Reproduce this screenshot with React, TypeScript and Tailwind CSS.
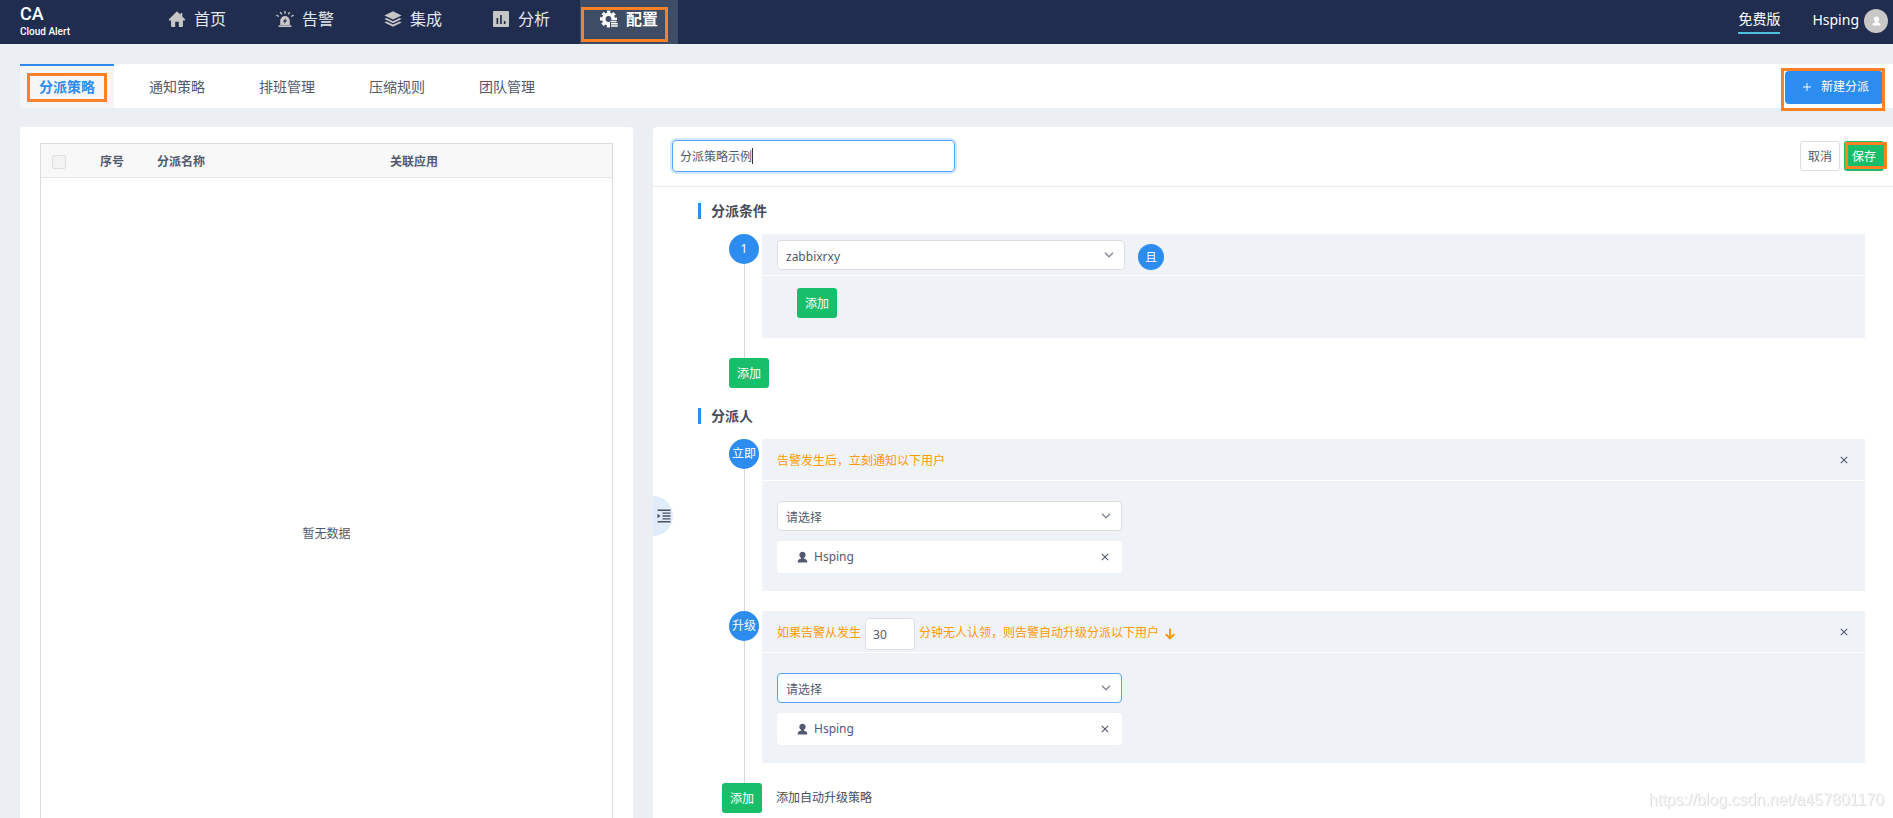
import React, { useState } from "react";

type IconProps = { className?: string };

const HomeIcon = ({ className }: IconProps) => (
  <svg viewBox="0 0 18 18" className={className} fill="currentColor" aria-hidden="true">
    <path d="M9 1.200 1 9.200a.7.7 0 0 0 .5 1.200H3V16a1 1 0 0 0 1 1h3.200v-5.200h3.600V17H14a1 1 0 0 0 1-1v-5.600h1.500a.7.7 0 0 0 .5-1.200L14.300 6.500V3h-1.800v1.700z" />
  </svg>
);

const AlarmIcon = ({ className }: IconProps) => (
  <svg viewBox="0 0 18 18" className={className} fill="currentColor" aria-hidden="true">
    <path fillRule="evenodd" d="M4.200 15V10.800a4.800 4.800 0 0 1 9.600 0V15zM9.800 8 6.900 11.800h1.700L8.200 14l2.900-3.700H9.400z" />
    <path d="M2.600 15.300h12.800V17H2.600z" />
    <path d="M9 1v2.800M4.300 2l1.400 2.300M13.700 2l-1.400 2.300M.4 5.200l2.400 1.300M17.600 5.200l-2.400 1.300" stroke="currentColor" strokeWidth="1.400" fill="none" />
  </svg>
);

const LayersIcon = ({ className }: IconProps) => (
  <svg viewBox="0 0 18 18" className={className} fill="currentColor" aria-hidden="true">
    <path d="M9 1.200.400 5.400 9 9.600l8.600-4.200z" />
    <path d="m.4 9 2-1L9 11.200 15.600 8l2 1L9 13.200z" />
    <path d="m.4 12.400 2-1L9 14.600l6.600-3.200 2 1L9 16.700z" />
  </svg>
);

const ChartIcon = ({ className }: IconProps) => (
  <svg viewBox="0 0 18 18" className={className} fill="currentColor" aria-hidden="true">
    <path fillRule="evenodd" d="M2 1h14a1 1 0 0 1 1 1v14a1 1 0 0 1-1 1H2a1 1 0 0 1-1-1V2a1 1 0 0 1 1-1zm2.500 7v6h1.700V8zm3.600-3v9h1.700V5zm3.700 6v3h1.700v-3z" />
  </svg>
);

const GearListIcon = ({ className }: IconProps) => (
  <svg viewBox="0 0 18 18" className={className} fill="none" stroke="currentColor" aria-hidden="true">
    <circle cx="8.500" cy="9" r="4.700" strokeWidth="3.600" />
    <circle cx="8.500" cy="9" r="7.200" strokeWidth="2.600" strokeDasharray="3.250 2.405" strokeDashoffset="1.625" />
    <path d="M10 10h8v8h-8z" fill="#3f4c66" stroke="none" />
    <path d="M10.600 11.500h6M11 13.700h6.800M11 16h6.800" strokeWidth="1.400" />
  </svg>
);

const UserIcon = ({ className }: IconProps) => (
  <svg viewBox="0 0 12 14" className={className} fill="currentColor" aria-hidden="true">
    <path d="M6 .8c2.200 0 3.700 1.500 3.700 3.700 0 1.600-.9 3-2 3.700v.8c2.500.3 3.900 1.400 3.900 3.700v.7H.4v-.7c0-2.300 1.400-3.400 3.900-3.700v-.8c-1.100-.7-2-2.100-2-3.700C2.300 2.300 3.800.8 6 .8z" />
  </svg>
);

const CloseIcon = ({ className }: IconProps) => (
  <svg viewBox="0 0 8 8" className={className} fill="none" stroke="currentColor" strokeWidth="1.100" aria-hidden="true">
    <path d="m.8.8 6.400 6.400M7.200.8.8 7.200" />
  </svg>
);

const ChevronIcon = ({ className }: IconProps) => (
  <svg viewBox="0 0 10 6" className={className} fill="none" stroke="currentColor" strokeWidth="1.300" aria-hidden="true">
    <path d="m1 .8 4 4 4-4" />
  </svg>
);

const ArrowDownIcon = ({ className }: IconProps) => (
  <svg viewBox="0 0 10 12" className={className} fill="none" stroke="currentColor" strokeWidth="1.900" aria-hidden="true">
    <path d="M5 .5v10M.8 6.200 5 10.300 9.200 6.200" />
  </svg>
);

const CollapseIcon = ({ className }: IconProps) => (
  <svg viewBox="0 0 14 14" className={className} fill="currentColor" aria-hidden="true">
    <path d="M.5.600h13V2H.5zM5.500 3.400h8v1.400h-8zM5.500 6.300h8v1.400h-8zM5.500 9.200h8v1.400h-8zM.5 12h13v1.400H.5zM.5 4.800 3.500 7 .5 9.200z" />
  </svg>
);

const Highlight = ({ className }: { className: string }) => (
  <span className={`pointer-events-none absolute border-3 border-[#ff8127] ${className}`} />
);

const navItems = [
  { label: "首页", Icon: HomeIcon },
  { label: "告警", Icon: AlarmIcon },
  { label: "集成", Icon: LayersIcon },
  { label: "分析", Icon: ChartIcon },
  { label: "配置", Icon: GearListIcon, active: true },
];

const tabs = ["分派策略", "通知策略", "排班管理", "压缩规则", "团队管理"];

function Header() {
  return (
    <header className="flex h-11 shrink-0 items-stretch bg-[#202d4e] text-white">
      <a href="#home" className="w-32 pl-5 pt-1 font-['Roboto']">
        <span className="block text-lg leading-5 font-medium">CA</span>
        <span className="block text-[10px] leading-4 font-medium">Cloud Alert</span>
      </a>
      <nav className="ml-5 flex gap-2.5">
        {navItems.map(({ label, Icon, active }) => (
          <a
            key={label}
            href={`#${label}`}
            className={`relative flex items-center gap-2 px-5 pb-1.5 text-base ${
              active ? "bg-[#3f4c66] font-bold text-white" : "text-[#e4e6ea]"
            }`}
          >
            <Icon className={active ? "size-[18px]" : "size-[18px] text-[#c6c6c6]"} />
            {label}
            {active && <Highlight className="top-[7px] right-2.5 bottom-0.5 left-px" />}
          </a>
        ))}
      </nav>
      <div className="ml-auto flex items-start text-sm">
        <a href="#plan" className="mt-[9px] h-[25px] border-b-2 border-[#4cc0dc] leading-5">
          免费版
        </a>
        <button type="button" className="ml-8 flex h-[42px] items-center gap-[5px] pr-[5px]">
          <span className="pb-0.5 leading-5">Hsping</span>
          <span className="flex size-6 items-center justify-center rounded-full bg-[#c8c8c8]">
            <UserIcon className="h-2.5 w-[9px]" />
          </span>
        </button>
      </div>
    </header>
  );
}

function Tabs() {
  return (
    <div className="mt-5 ml-5 flex h-11 shrink-0 bg-white">
      <div className="flex gap-4">
        {tabs.map((tab, i) => (
          <a
            key={tab}
            href={`#${tab}`}
            className={`relative flex items-center border-t-2 px-[19px] text-sm ${
              i === 0 ? "border-[#2d8cf0] bg-[#f5f5f6] font-bold text-[#2d8cf0]" : "border-transparent text-[#515a6e]"
            }`}
          >
            {tab}
            {i === 0 && <Highlight className="inset-x-[7px] top-[7px] bottom-[6px]" />}
          </a>
        ))}
      </div>
      <div className="relative mt-[7px] mr-2.5 ml-auto h-[33px]">
        <button type="button" className="flex h-full items-center gap-2.5 rounded bg-[#2d8cf0] pr-3.5 pb-0.5 pl-[18px] text-xs text-white">
          <svg viewBox="0 0 10 10" className="size-2" stroke="currentColor" strokeWidth="1.200" aria-hidden="true">
            <path d="M5 0v10M0 5h10" />
          </svg>
          新建分派
        </button>
        <Highlight className="-top-[3px] -right-0.5 -bottom-[7px] -left-1" />
      </div>
    </div>
  );
}

function PolicyList() {
  return (
    <section className="min-h-[770px] rounded-t-[4px] bg-white px-5 pt-4">
      <div className="border border-[#d9dce2]">
        <table className="w-full table-fixed border-collapse text-left text-xs text-[#515a6e]">
          <thead>
            <tr className="h-[33px] border-b border-[#e4e6ea] bg-[#f8f8f9]">
              <th className="w-[59px] pt-1 pl-[11px]">
                <input
                  type="checkbox"
                  aria-label="全选"
                  disabled
                  className="block size-3.5 appearance-none rounded-xs border border-[#dcdee2] bg-[#f3f3f3]"
                />
              </th>
              <th className="w-[57px] pt-1">序号</th>
              <th className="w-[233px] pt-1">分派名称</th>
              <th className="pt-1">关联应用</th>
            </tr>
          </thead>
          <tbody>
            <tr>
              <td colSpan={4} className="h-[713px] text-center">
                暂无数据
              </td>
            </tr>
          </tbody>
        </table>
      </div>
    </section>
  );
}

const AddButton = () => (
  <button type="button" className="block h-[30px] w-10 rounded-[3px] bg-[#19be6b] pt-0.5 text-center text-xs text-white">
    添加
  </button>
);

function SelectBox({ label, options, width, focused }: { label: string; options: string[]; width: string; focused?: boolean }) {
  return (
    <div className={`relative ${width}`}>
      <select
        aria-label={label}
        className={`block h-[30px] w-full appearance-none rounded border bg-white pt-1 pl-2 text-xs text-[#515a6e] outline-none ${
          focused ? "border-[#57a3f3]" : "border-[#dcdee2]"
        }`}
      >
        {options.map((o) => (
          <option key={o}>{o}</option>
        ))}
      </select>
      <ChevronIcon className="pointer-events-none absolute top-3 right-[11px] h-1.5 w-2.5 text-[#808695]" />
    </div>
  );
}

const SectionTitle = ({ children }: { children: React.ReactNode }) => (
  <h2 className="mb-[15px] ml-[45px] border-l-3 border-[#2d8cf0] pl-2.5 text-sm leading-4 font-bold text-[#464c5b]">
    {children}
  </h2>
);

function Step({ marker, head, children }: { marker: string; head: React.ReactNode; children: React.ReactNode }) {
  return (
    <div className="flex gap-[3px] pr-7 pl-[76px]">
      <div className="flex w-[30px] shrink-0 flex-col items-center">
        <span className="flex size-[30px] items-center justify-center rounded-full bg-[#2d8cf0] text-xs whitespace-nowrap text-white">
          {marker}
        </span>
        <span className="w-px grow bg-[#d7d7d7]" />
      </div>
      <div className="grow pb-5">
        <div className="flex h-[41px] items-center bg-[#eff3f8] pr-[17px] pl-[15px]">{head}</div>
        <div className="mt-px bg-[#eff3f8]">{children}</div>
      </div>
    </div>
  );
}

const RemoveButton = ({ label }: { label: string }) => (
  <button type="button" aria-label={label} className="ml-auto text-[#515a6e]">
    <CloseIcon className="size-2" />
  </button>
);

function Assignees({ focused }: { focused?: boolean }) {
  return (
    <div className="pt-5 pb-[18px] pl-[15px]">
      <SelectBox label="选择用户" options={["请选择"]} width="w-[345px]" focused={focused} />
      <div className="mt-2.5 flex h-8 w-[345px] items-center rounded bg-white pr-[13px] pl-5 text-xs text-[#515a6e]">
        <UserIcon className="mr-1.5 h-3 w-[11px]" />
        Hsping
        <RemoveButton label="移除用户" />
      </div>
    </div>
  );
}

function PolicyEditor() {
  const [name, setName] = useState("分派策略示例");
  const [minutes, setMinutes] = useState("30");
  return (
    <section className="relative rounded-tl-[4px] bg-white">
      <div className="flex h-[60px] items-start border-b border-[#e9eaec] pt-[13px] pr-[9px] pl-[19px]">
        <div className="relative">
          <input
            aria-label="分派名称"
            value={name}
            onChange={(e) => setName(e.target.value)}
            className="block h-8 w-[283px] rounded border border-[#57a3f3] px-[7px] text-xs text-[#515a6e] ring-2 ring-[#d5e8fc] outline-none"
          />
          <span className="pointer-events-none absolute top-2 left-20 h-4 w-px bg-[#333a4d]" />
        </div>
        <div className="mt-px ml-auto flex gap-1 text-xs">
          <button type="button" className="h-[30px] w-10 rounded-[3px] border border-[#dcdee2] bg-white pt-0.5 text-[#515a6e]">
            取消
          </button>
          <div className="relative">
            <button type="button" className="h-[30px] w-10 rounded-[3px] bg-[#19be6b] pt-0.5 text-white">
              保存
            </button>
            <Highlight className="top-px -right-[3px] bottom-0.5 left-px" />
          </div>
        </div>
      </div>

      <div className="pt-4">
        <SectionTitle>分派条件</SectionTitle>
        <Step
          marker="1"
          head={
            <>
              <SelectBox label="应用" options={["zabbixrxy"]} width="w-[348px]" />
              <button
                type="button"
                className="mt-1 ml-[13px] size-[26px] rounded-full bg-[#2d8cf0] pt-0.5 text-center text-xs text-white"
              >
                且
              </button>
            </>
          }
        >
          <div className="pt-3 pb-5 pl-[35px]">
            <AddButton />
          </div>
        </Step>
        <div className="mb-5 pl-[76px]">
          <AddButton />
        </div>

        <SectionTitle>分派人</SectionTitle>
        <Step
          marker="立即"
          head={
            <>
              <span className="pt-0.5 text-xs text-[#ff9900]">告警发生后，立刻通知以下用户</span>
              <RemoveButton label="删除立即通知" />
            </>
          }
        >
          <Assignees />
        </Step>
        <Step
          marker="升级"
          head={
            <>
              <label htmlFor="minutes" className="pt-0.5 text-xs text-[#ff9900]">
                如果告警从发生
              </label>
              <input
                id="minutes"
                value={minutes}
                onChange={(e) => setMinutes(e.target.value)}
                className="mx-1 mt-1 h-8 w-[50px] rounded border border-[#dcdee2] bg-white px-[7px] pt-0.5 text-xs text-[#515a6e] outline-none"
              />
              <span className="pt-0.5 text-xs text-[#ff9900]">分钟无人认领，则告警自动升级分派以下用户</span>
              <ArrowDownIcon className="mt-1 ml-1.5 h-3 w-2.5 text-[#ff9900]" />
              <RemoveButton label="删除升级策略" />
            </>
          }
        >
          <Assignees focused />
        </Step>
        <div className="flex items-center gap-3.5 pl-[69px] text-xs text-[#464c5b]">
          <AddButton />
          添加自动升级策略
        </div>
      </div>

      <button
        type="button"
        aria-label="收起列表"
        className="absolute top-[369px] left-0 flex h-10 w-5 items-center justify-end rounded-r-full bg-[#e1ecfb] pr-0.5 text-[#495060]"
      >
        <CollapseIcon className="size-3.5" />
      </button>
    </section>
  );
}

export default function App() {
  return (
    <div className="relative flex h-screen flex-col overflow-hidden bg-[#ebeef3] font-['Noto_Sans','Noto_Sans_CJK_SC',sans-serif]">
      <Header />
      <Tabs />
      <main className="mt-[19px] ml-5 grid grow grid-cols-[613fr_1240fr] gap-5">
        <PolicyList />
        <PolicyEditor />
      </main>
      <span className="pointer-events-none absolute right-[9px] bottom-1.5 font-['Liberation_Sans'] text-base text-[#f4f4f4] drop-shadow-[1px_1px_0_#dedede]">
        https://blog.csdn.net/a457801170
      </span>
    </div>
  );
}
